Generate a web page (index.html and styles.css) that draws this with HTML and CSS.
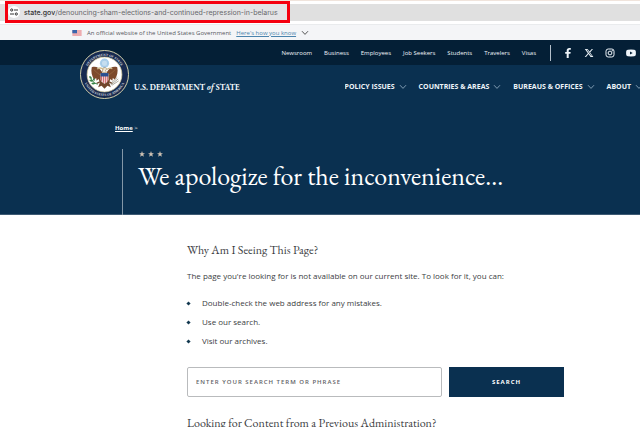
FILE: index.html
```
<!DOCTYPE html>
<html lang="en">
<head>
<meta charset="utf-8">
<title>Page not found - United States Department of State</title>
<meta name="viewport" content="width=device-width, initial-scale=1">
<link rel="stylesheet" href="styles.css">
</head>
<body>
<svg class="defs" aria-hidden="true">
  <symbol id="chevron" viewBox="0 0 8 6"><path d="M1 1.2 4 4.4 7 1.2" fill="none" stroke="currentColor"/></symbol>
  <symbol id="star" viewBox="0 0 10 10"><path d="M5 0 6.3 3.6 10 3.7 7.1 6 8.1 9.6 5 7.5 1.9 9.6 2.9 6 0 3.7 3.7 3.6Z" fill="currentColor"/></symbol>
</svg>

<div class="browser-bar">
  <div class="address">
    <button class="site-info" type="button" aria-label="View site information">
      <svg viewBox="0 0 8 8"><g fill="none" stroke="#333" stroke-width="1"><path d="M4 2H8M0 6H4"/><circle cx="1.7" cy="2" r="1.1"/><circle cx="6.3" cy="6" r="1.1"/></g></svg>
    </button>
    <span class="url"><b>state.gov</b>/denouncing-sham-elections-and-continued-repression-in-belarus</span>
  </div>
</div>

<div class="gov-banner">
  <svg class="flag" viewBox="0 0 20 13" aria-hidden="true">
    <path fill="#fff" d="M0 0H20V13H0Z"/>
    <path stroke="#d8434c" stroke-width="1" d="M0 .5H20M0 2.5H20M0 4.5H20M0 6.5H20M0 8.5H20M0 10.5H20M0 12.5H20"/>
    <path fill="#2c5ba5" d="M0 0H10V7H0Z"/>
    <path stroke="#b9cbe8" stroke-width=".7" stroke-dasharray=".7 1.3" d="M1 1.5H9.5M2 3.5H9.5M1 5.5H9.5"/>
  </svg>
  <span>An official website of the United States Government</span>
  <a href="#how">Here's how you know</a>
  <svg class="chevron" aria-hidden="true"><use href="#chevron"/></svg>
</div>

<header class="site-header">
  <div class="utility">
    <nav class="utility-nav" aria-label="Utility">
      <a href="#newsroom">Newsroom</a>
      <a href="#business">Business</a>
      <a href="#employees">Employees</a>
      <a href="#jobs">Job Seekers</a>
      <a href="#students">Students</a>
      <a href="#travelers">Travelers</a>
      <a href="#visas">Visas</a>
    </nav>
    <div class="social">
      <a href="#facebook" aria-label="Facebook"><svg viewBox="0 0 10 10"><path fill="currentColor" d="M3.7 10V5.8H2.2V4H3.7V2.7C3.7.9 4.7 0 6.3 0 7 0 7.5.1 7.8.1V1.7H6.9C6 1.7 5.7 2.2 5.7 2.8V4H7.7L7.4 5.8H5.7V10Z"/></svg></a>
      <a href="#x" aria-label="X"><svg viewBox="0 0 10 10"><path fill="currentColor" fill-rule="evenodd" d="M.8 1H3.6L5.5 3.6 7.8 1H9L6.1 4.4 9.4 9H6.6L4.5 6.1 2 9H.7L3.9 5.3ZM2.6 1.8 7.1 8.1H7.8L3.3 1.8Z"/></svg></a>
      <a href="#instagram" aria-label="Instagram"><svg viewBox="0 0 10 10"><g fill="none" stroke="currentColor"><rect x="1" y="1" width="8" height="8" rx="2.2"/><circle cx="5" cy="5" r="1.9"/></g><circle cx="7.3" cy="2.7" r=".6" fill="currentColor"/></svg></a>
      <a href="#youtube" aria-label="YouTube"><svg viewBox="0 0 10 10"><path fill="currentColor" fill-rule="evenodd" d="M1.8 1.7Q5 1.4 8.2 1.7 9.7 1.8 9.8 3.2 10 5 9.8 6.8 9.7 8.2 8.2 8.3 5 8.6 1.8 8.3.3 8.2.2 6.8 0 5 .2 3.2.3 1.8 1.8 1.7ZM4 3.4V6.6L6.7 5Z"/></svg></a>
    </div>
  </div>
  <div class="masthead">
    <a class="brand" href="#home">
      <svg class="seal" viewBox="0 0 100 100" role="img" aria-label="Department of State seal">
        <defs>
          <path id="arc-top" d="M12 57A38.500 38.500 0 1 1 88 57"/>
          <path id="arc-bottom" d="M6 50A44 44 0 0 0 94 50"/>
        </defs>
        <circle cx="50" cy="50" r="49" fill="#172a50" stroke="#d9d5ad" stroke-width="2"/>
        <circle cx="50" cy="50" r="35.500" fill="#fff" stroke="#d9cf9f" stroke-width="1.500"/>
        <text class="seal-text"><textPath href="#arc-top" startOffset="50%">DEPARTMENT OF STATE</textPath></text>
        <text class="seal-text"><textPath href="#arc-bottom" startOffset="50%">UNITED STATES OF AMERICA</textPath></text>
        <circle cx="50" cy="27" r="9.500" fill="#a9cfeb"/>
        <circle cx="50" cy="27" r="6" fill="#c5def0" stroke="#7faed3" stroke-dasharray="1 1"/>
        <path fill="#7d4a2c" d="M45 45C40 36 32 32 24 35 22 44 24 53 29 60L33 57 34 63 38 59 40 65 46 63ZM55 45C60 36 68 32 76 35 78 44 76 53 71 60L67 57 66 63 62 59 60 65 54 63Z"/>
        <path fill="none" stroke="#a5774b" d="M28 40Q34 46 41 51M72 40Q66 46 59 51"/>
        <path fill="#71452b" d="M43 60H57L63 76 56 73 50 79 44 73 37 76Z"/>
        <path fill="#f2ead8" stroke="#8c693c" d="M46 46V39Q47 35 52 36L55 39 52 41 54 46Z"/>
        <path fill="none" stroke="#cdb98a" stroke-width="2.500" d="M35 39Q42 34 48 40M54 40Q60 35 66 38"/>
        <path fill="#fff" d="M42 48H58V61Q56 67 50 69 44 67 42 61Z"/>
        <path stroke="#c33e48" stroke-width="2" d="M43.500 52V63M47.500 52V67M51.500 52V68M55.500 52V65"/>
        <path fill="#294f91" d="M42 47H58V54H42Z"/>
        <path fill="none" stroke="#71452b" stroke-width="2.500" d="M43 64 34 68M57 64 66 68"/>
        <path fill="none" stroke="#398346" stroke-width="2" d="M36 70Q28 69 23 59"/>
        <path fill="#398346" d="M24 59Q18 59 19 53 25 54 24 59M27 64Q20 66 19 61 24 59 27 64M29 64Q32 59 27 57 25 61 29 64M32 68Q26 73 23 68 27 65 32 68"/>
        <path stroke="#8f8b7b" stroke-width="1.500" d="M63 71 78 59M62 69 76 56M65 72 79 63"/>
      </svg>
      <span class="wordmark">U.S. DEPARTMENT <i>of</i> STATE</span>
    </a>
    <nav class="main-nav" aria-label="Main">
      <button type="button">POLICY ISSUES<svg class="chevron"><use href="#chevron"/></svg></button>
      <button type="button">COUNTRIES &amp; AREAS<svg class="chevron"><use href="#chevron"/></svg></button>
      <button type="button">BUREAUS &amp; OFFICES<svg class="chevron"><use href="#chevron"/></svg></button>
      <button type="button">ABOUT<svg class="chevron"><use href="#chevron"/></svg></button>
    </nav>
  </div>
</header>

<section class="hero">
  <nav class="crumbs" aria-label="Breadcrumb"><a href="#home">Home</a> &gt;</nav>
  <div class="hero-title">
    <div class="stars" aria-hidden="true"><svg><use href="#star"/></svg><svg><use href="#star"/></svg><svg><use href="#star"/></svg></div>
    <h1>We apologize for the inconvenience...</h1>
  </div>
</section>

<main class="content">
  <h2>Why Am I Seeing This Page?</h2>
  <p>The page you're looking for is not available on our current site. To look for it, you can:</p>
  <ul>
    <li>Double-check the web address for any mistakes.</li>
    <li>Use our search.</li>
    <li>Visit our archives.</li>
  </ul>
  <form class="search">
    <input type="search" aria-label="Enter your search term or phrase" placeholder="ENTER YOUR SEARCH TERM OR PHRASE">
    <button type="submit">SEARCH</button>
  </form>
  <h2>Looking for Content from a Previous Administration?</h2>
</main>
</body>
</html>
```
FILE: styles.css
```
* { box-sizing: border-box; }

html, body { height: 100%; }

body {
  margin: 0;
  overflow: hidden;
  background: #fff;
  color: #3b3d42;
  font-family: "Open Sans", "Noto Sans", sans-serif;
  font-size: 8px;
}

a { color: inherit; text-decoration: none; }
button { border: 0; padding: 0; background: none; color: inherit; font-family: inherit; }
svg { display: block; flex: none; }
h1, h2 { margin: 0; font-family: "EB Garamond", "Liberation Serif", serif; font-weight: 400; }

.defs { position: absolute; width: 0; height: 0; }
.chevron { width: 8px; height: 6px; }

/* Browser address bar */
.browser-bar {
  height: 24px;
  padding-top: 1px;
  border-top: 1px solid #f0e4dc;
  background: linear-gradient(#fff 3px, #e0e0e0 3px, #e0e0e0 20px, #fff 20px);
}
.address {
  display: flex;
  align-items: center;
  gap: 4px;
  width: 285px;
  height: 22px;
  margin: -1px 0 0 5px;
  border: 3px solid #f5000f;
  background: #e4e4e6;
}
.site-info {
  display: grid;
  flex: none;
  place-items: center;
  width: 12px;
  height: 12px;
  border-radius: 50%;
  background: #fff;
}
.site-info svg { width: 8px; height: 8px; }
.url { color: #68686c; font-family: Inter, sans-serif; font-size: 7px; white-space: nowrap; }
.url b { color: #333; font-weight: 500; }

/* Government banner */
.gov-banner {
  display: flex;
  align-items: center;
  gap: 5px;
  height: 16px;
  padding-left: 72px;
  border-top: 1px solid #e9ebed;
  background: #f4f5f7;
  color: #55585d;
  font-size: 6px;
}
.gov-banner a { color: #4a84ad; text-decoration: underline; }
.gov-banner .chevron { color: #555; }
.flag { width: 10px; height: 6px; }

/* Header */
.site-header { background: #0a3050; color: #eef4f9; }
.utility {
  display: flex;
  justify-content: flex-end;
  align-items: center;
  height: 25px;
  padding-right: 4px;
  background: #041f36;
  font-size: 6px;
}
.utility-nav { display: flex; gap: 12px; }
.social {
  display: flex;
  align-items: center;
  gap: 11px;
  height: 16px;
  margin-left: 14px;
  padding-left: 12px;
  border-left: 1px solid #b3bfca;
}
.social svg { width: 10px; height: 10px; }
.masthead {
  display: flex;
  justify-content: space-between;
  align-items: center;
  height: 43px;
  padding-left: 80px;
}
.brand { display: flex; align-items: center; gap: 5px; }
.seal { width: 49px; height: 49px; margin-top: -24px; }
.seal-text { fill: #d5d9df; font: 700 7px "Liberation Serif", serif; text-anchor: middle; }
.wordmark { font-family: "EB Garamond", "Liberation Serif", serif; font-size: 8px; font-weight: 700; white-space: nowrap; }
.main-nav { display: flex; gap: 12px; margin-right: -3px; overflow: hidden; }
.main-nav button { display: flex; align-items: center; gap: 4px; font-size: 7px; font-weight: 700; white-space: nowrap; }
.main-nav .chevron { color: #7f9bb2; }

/* Hero */
.hero {
  height: 107px;
  padding: 15px 0 0 115px;
  background: #0a3050;
  border-bottom: 1px solid #3d5a73;
  color: #fff;
}
.crumbs { font-size: 6px; line-height: 10px; }
.crumbs a { font-weight: 700; text-decoration: underline; }
.hero-title { height: 66px; margin: 16px 0 0 7px; padding: 2px 0 0 15px; border-left: 1px solid #8497a7; }
.stars { display: flex; gap: 3px; padding-left: 1px; color: #cfc2b4; }
.stars svg { width: 6px; height: 6px; }
.stars use { width: 6px; height: 6px; }
h1 { margin-top: 4px; font-size: 26px; line-height: 30px; white-space: nowrap; }

/* Content */
.content { max-width: 564px; padding: 27px 0 0 187px; }
h2 { font-size: 12px; line-height: 16px; white-space: nowrap; }
p { margin: 12px 0 0; line-height: 12px; white-space: nowrap; }
ul { display: grid; gap: 7px; margin: 15px 0 0; padding: 0; list-style: none; line-height: 12px; }
li { display: flex; align-items: center; gap: 12px; }
li::before { content: ""; width: 3px; height: 3px; background: #12384f; transform: rotate(45deg); }
.search { display: grid; grid-template-columns: 255px 1fr; gap: 7px; margin: 20px 0 18px; }
.search input {
  height: 30px;
  padding: 0 8px;
  border: 1px solid #b9bbbd;
  border-radius: 2px;
  background: #fff;
  font-family: inherit;
  font-size: 6px;
  letter-spacing: 1px;
}
.search input::placeholder { color: #5f6266; font-weight: 600; }
.search button { height: 30px; background: #0a3050; color: #fff; font-size: 6px; font-weight: 700; letter-spacing: 1px; }
```
